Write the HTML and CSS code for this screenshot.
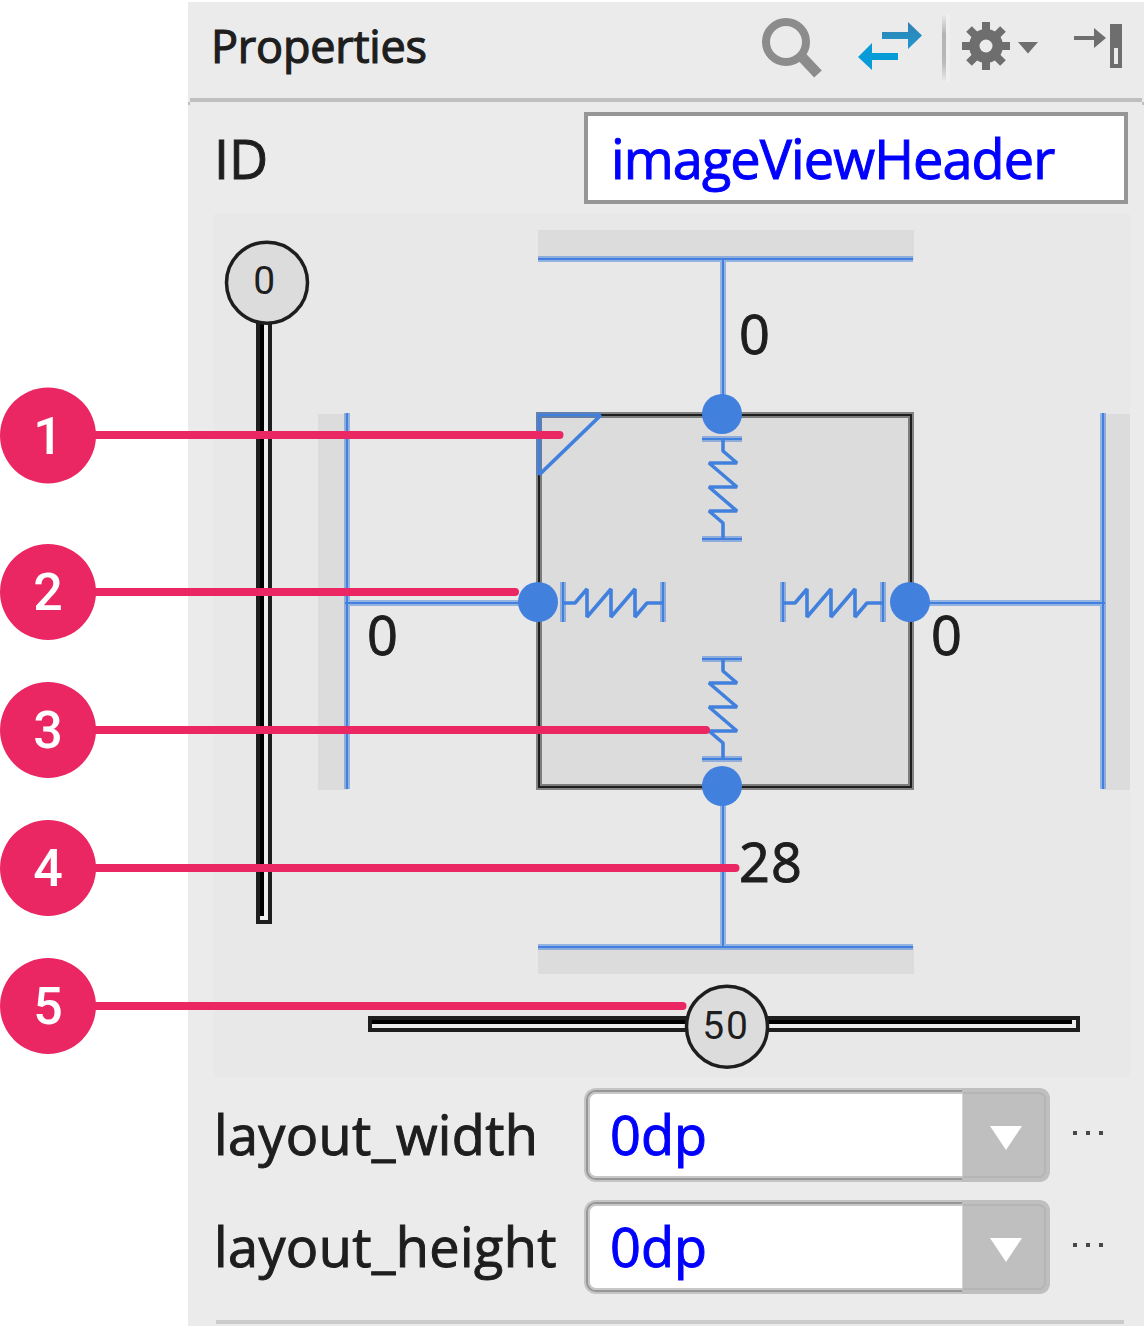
FILE: index.html
```html
<!DOCTYPE html>
<html lang="en">
<head>
<meta charset="utf-8">
<title>Properties</title>
<link rel="stylesheet" href="styles.css">
</head>
<body>
<main class="page">
  <section class="panel">
    <header class="toolbar">
      <h1 class="title">Properties</h1>
      <svg class="tools" viewBox="750 2 394 96" width="394" height="96" aria-hidden="true">
        <defs>
          <linearGradient id="fade" x1="0" y1="0" x2="0" y2="1">
            <stop offset="0" stop-color="#b4b4b4" stop-opacity="0"/>
            <stop offset=".3" stop-color="#b4b4b4"/>
            <stop offset=".7" stop-color="#b9b9b9"/>
            <stop offset="1" stop-color="#b4b4b4" stop-opacity="0"/>
          </linearGradient>
          <linearGradient id="blue" x1="0" y1="0" x2="0" y2="1">
            <stop offset="0" stop-color="#3381b0"/>
            <stop offset="1" stop-color="#1d98d0"/>
          </linearGradient>
        </defs>
        <g fill="none" stroke="#8c8c8c">
          <circle cx="786" cy="42" r="20" stroke-width="8"/>
          <path d="M801 56L818 74" stroke-width="10.5"/>
        </g>
        <path fill="url(#blue)" d="M882 32H908V22L922 35.500L908 49V39H882Z"/>
        <path fill="#079bd8" d="M898 53H872V43L858 57L872 70V60H898Z"/>
        <rect x="942" y="14" width="4" height="68" fill="url(#fade)"/>
        <rect x="946" y="14" width="4" height="68" fill="#f2f2f2" opacity=".6"/>
        <g fill="#6e6e6e">
          <g id="teeth">
            <rect x="982" y="22" width="8" height="48"/>
            <rect x="962" y="42" width="48" height="8"/>
          </g>
          <use href="#teeth" transform="rotate(45 986 46)"/>
          <circle cx="986" cy="46" r="17"/>
          <path d="M1018 42H1038L1028 53.500Z"/>
          <path d="M1074 36H1094V28L1106 38L1094 48V40H1074Z"/>
          <path fill-rule="evenodd" d="M1110 24H1122V68H1110ZM1114 48V64H1118V48Z"/>
        </g>
        <circle cx="986" cy="46" r="6.500" fill="#ececec"/>
      </svg>
    </header>

    <div class="row row-id">
      <label class="label" for="view-id">ID</label>
      <div class="field" id="view-id"><span class="value value-id">imageViewHeader</span></div>
    </div>

    <svg class="inspector" viewBox="214 214 916 864" width="916" height="864">
      <defs>
        <path id="spring-v" d="M723 439V451L737 463H709L737 487H709L737 511H709L723 523V539"/>
        <path id="spring-h" d="M563 603H575L587 589V617L611 589V617L635 589V617L647 603H663"/>
        <g id="wires">
          <path d="M538 259H913M538 947H913M347 413V789M1103 413V789"/>
          <path d="M723 259V400M723 790V947M345 603H530M920 603H1105"/>
          <path d="M539 475V415H601"/>
          <path d="M702 439H742M702 539H742M702 659H742M702 759H742"/>
          <path d="M563 582V622M663 582V622M783 582V622M883 582V622"/>
        </g>
      </defs>
      <g class="anchor">
        <rect x="538" y="230" width="376" height="30"/>
        <rect x="538" y="946" width="376" height="28"/>
        <rect x="318" y="414" width="30" height="376"/>
        <rect x="1102" y="414" width="28" height="376"/>
        <rect x="539" y="415" width="372" height="372"/>
      </g>
      <g class="frame">
        <rect class="halo" x="539" y="415" width="372" height="372"/>
        <rect class="core" x="539" y="415" width="372" height="372"/>
      </g>
      <g class="wire">
        <use class="halo" href="#wires"/>
        <use class="core" href="#wires"/>
        <path class="diagonal" d="M601 415L539 475"/>
        <g class="spring">
          <use href="#spring-v"/>
          <use href="#spring-v" y="220"/>
          <use href="#spring-h"/>
          <use href="#spring-h" x="220"/>
        </g>
      </g>
      <g class="handle">
        <circle cx="722" cy="414" r="20"/>
        <circle cx="538" cy="602" r="20"/>
        <circle cx="910" cy="602" r="20"/>
        <circle cx="722" cy="786" r="20"/>
      </g>
      <g class="margin">
        <text x="739" y="354">0</text>
        <text x="367" y="655">0</text>
        <text x="931" y="655">0</text>
        <text x="739" y="882">28</text>
      </g>
      <g>
        <path fill="#1e1e1e" d="M256 300H272V924H256ZM368 1016H1080V1032H368Z"/>
        <path fill="#eeeeee" d="M260 300H268V920H260ZM372 1020H1076V1028H372Z"/>
        <path d="M260 300H264V916H260ZM372 1020H1072V1024H372Z"/>
      </g>
      <g class="knob">
        <circle cx="267" cy="282.700" r="40.500"/>
        <circle cx="727" cy="1026.700" r="40.500"/>
        <text x="265" y="294">0</text>
        <text x="726" y="1038.500">50</text>
      </g>
    </svg>

    <div class="row row-size">
      <span class="label label-width">layout_width</span>
      <div class="select">
        <span class="value">0dp</span>
        <svg class="select-button" width="88" height="94" viewBox="0 0 88 94">
          <path fill="#bfbfbf" d="M0 0H76Q88 0 88 12V82Q88 94 76 94H0Z"/>
          <path fill="none" stroke="#b5b5b5" stroke-width="2" d="M0 5H76Q83 5 83 12V82Q83 89 76 89H0"/>
          <path fill="#d2d2d2" d="M-1 5H1V89H-1Z"/>
          <path fill="#fff" d="M28 38H60L44 62Z"/>
        </svg>
      </div>
      <span class="more"><i></i><i></i><i></i></span>
    </div>
    <div class="row row-size">
      <span class="label label-height">layout_height</span>
      <div class="select">
        <span class="value">0dp</span>
        <svg class="select-button" width="88" height="94" viewBox="0 0 88 94">
          <path fill="#bfbfbf" d="M0 0H76Q88 0 88 12V82Q88 94 76 94H0Z"/>
          <path fill="none" stroke="#b5b5b5" stroke-width="2" d="M0 5H76Q83 5 83 12V82Q83 89 76 89H0"/>
          <path fill="#d2d2d2" d="M-1 5H1V89H-1Z"/>
          <path fill="#fff" d="M28 38H60L44 62Z"/>
        </svg>
      </div>
      <span class="more"><i></i><i></i><i></i></span>
    </div>
    <hr class="rule">
  </section>

  <svg class="callouts" viewBox="0 0 1146 1326" width="1146" height="1326">
    <path d="M48 435H559.500M48 592H515M48 730H706M48 868H735.500M48 1006H682.500"/>
    <g class="badge">
      <circle cx="48" cy="435.500" r="48"/>
      <circle cx="48" cy="592" r="48"/>
      <circle cx="48" cy="730" r="48"/>
      <circle cx="48" cy="868" r="48"/>
      <circle cx="48" cy="1006" r="48"/>
    </g>
    <g class="number">
      <text x="48" y="454">1</text>
      <text x="48" y="610">2</text>
      <text x="48" y="748">3</text>
      <text x="48" y="886">4</text>
      <text x="48" y="1024">5</text>
    </g>
  </svg>
</main>
</body>
</html>
```
FILE: styles.css
```css
* { box-sizing: border-box; }

body {
  margin: 0;
  background: #fff;
  color: #1e1e1e;
  font-family: "Open Sans", "Noto Sans", sans-serif;
}

.page {
  position: relative;
  width: 1146px;
  height: 1326px;
  padding: 2px 2px 0 188px;
  overflow: hidden;
}

.panel {
  display: flex;
  flex-direction: column;
  height: 1324px;
  background:
    linear-gradient(#bfbfbf, #bfbfbf) 0 100px / 2px 3px no-repeat,
    linear-gradient(#bfbfbf, #bfbfbf) 100% 100px / 2px 3px no-repeat,
    #ebebeb;
}

.toolbar {
  display: flex;
  justify-content: space-between;
  align-items: flex-start;
  height: 100px;
  margin: 0 2px;
  border-bottom: 4px solid #bfbfbf;
}

.title {
  margin: 0 0 0 21px;
  font-size: 45px;
  line-height: 88px;
  font-weight: 400;
  letter-spacing: -0.2px;
  -webkit-text-stroke: 1.2px currentColor;
}

.tools { flex: none; margin-right: -2px; }

.row {
  display: flex;
  align-items: center;
  font-size: 54px;
  line-height: 80px;
  -webkit-text-stroke: 1px currentColor;
}

.row-id {
  height: 92px;
  margin: 10px 16px 10px 26px;
}

.label { width: 370px; white-space: nowrap; }
.label-width { letter-spacing: 0.35px; }
.label-height { letter-spacing: 0.38px; }

.field {
  display: flex;
  align-items: center;
  width: 544px;
  height: 92px;
  padding-left: 23px;
  border: 4px solid #969696;
  background: #fff;
}

.value { color: #0000ff; }
.value-id { letter-spacing: -0.9px; }

.inspector {
  flex: none;
  margin-left: 26px;
  background: #e8e8e8;
}

.anchor { fill: #dcdcdc; }
.frame { fill: none; stroke: #1e1e1e; }
.wire { fill: none; stroke: #4280de; }
.halo { stroke-width: 6px; opacity: .5; }
.core { stroke-width: 2px; }
.diagonal { stroke-width: 3.8px; }
.spring { stroke-width: 3.6px; stroke-linejoin: bevel; }
.handle { fill: #4280de; }
.margin {
  fill: #1e1e1e;
  stroke: #1e1e1e;
  stroke-width: 1px;
  font-size: 54px;
  letter-spacing: 1.2px;
}

.knob circle { fill: #dcdcdc; stroke: #1e1e1e; stroke-width: 3.5px; }
.knob text {
  fill: #1e1e1e;
  font: 400 39px Roboto, "Liberation Sans", sans-serif;
  letter-spacing: 1.8px;
  text-anchor: middle;
}

.row-size {
  height: 94px;
  margin: 10px 16px 8px 26px;
}

.row-size .label,
.row-size .value { margin-top: -2px; }

.row-size + .row-size { margin-bottom: 26px; }

.select {
  display: flex;
  flex: none;
  justify-content: space-between;
  align-items: center;
  width: 462px;
  height: 90px;
  margin-left: 2px;
  padding-left: 22px;
  border: 2px solid #969696;
  border-radius: 10px;
  background: #fff;
  box-shadow: 0 0 0 2px #c4c4c4, inset 0 0 0 2px #c8c8c8;
}

.select-button { flex: none; margin-right: -4px; }

.more { display: flex; gap: 9px; margin: -5px 0 0 25px; }
.more i { width: 4px; height: 4px; background: #484848; }

.rule {
  width: 908px;
  height: 4px;
  margin: 0 0 0 28px;
  border: 0;
  background: #cbcbcb;
}

.callouts {
  position: absolute;
  inset: 0;
  fill: #ea2663;
}

.callouts path { stroke: #ea2663; stroke-width: 8px; stroke-linecap: round; }
.number {
  fill: #fff;
  font: 500 52px Roboto, sans-serif;
  text-anchor: middle;
}
```
